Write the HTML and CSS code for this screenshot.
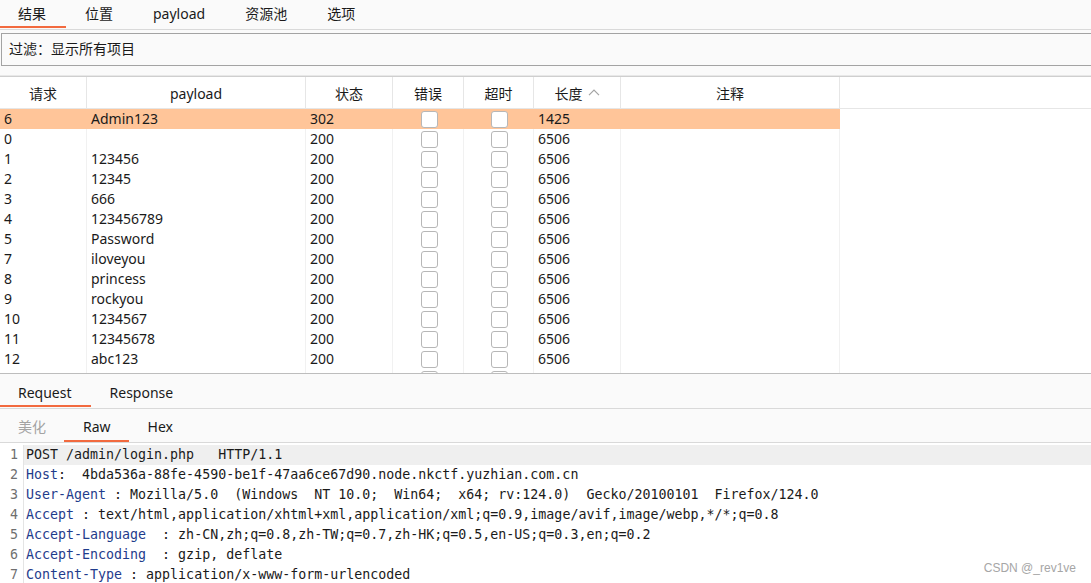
FILE: index.html
```html
<!DOCTYPE html>
<html lang="zh-CN">
<head>
<meta charset="utf-8">
<title>Intruder 结果</title>
<link rel="stylesheet" href="styles.css">
</head>
<body>
<div class="app">
  <nav class="tabs top-tabs">
    <span class="tab active">结果</span>
    <span class="tab">位置</span>
    <span class="tab">payload</span>
    <span class="tab">资源池</span>
    <span class="tab">选项</span>
  </nav>

  <div class="filter">过滤：显示所有项目</div>

  <div class="table">
    <div class="thead">
      <div class="row head">
        <div class="cell">请求</div>
        <div class="cell">payload</div>
        <div class="cell">状态</div>
        <div class="cell">错误</div>
        <div class="cell">超时</div>
        <div class="cell"><span class="sort">长度<svg class="chev" width="12" height="7" viewBox="0 0 12 7"><polyline points="1,6.2 6,1.2 11,6.2" fill="none" stroke="#a3a3a3" stroke-width="1.2"/></svg></span></div>
        <div class="cell">注释</div>
      </div>
    </div>
    <div class="tbody">
      <div class="row sel"><div class="cell">6</div><div class="cell">Admin123</div><div class="cell">302</div><div class="cell c"><i class="cb"></i></div><div class="cell c"><i class="cb"></i></div><div class="cell">1425</div><div class="cell"></div></div>
      <div class="row"><div class="cell">0</div><div class="cell"></div><div class="cell">200</div><div class="cell c"><i class="cb"></i></div><div class="cell c"><i class="cb"></i></div><div class="cell">6506</div><div class="cell"></div></div>
      <div class="row"><div class="cell">1</div><div class="cell">123456</div><div class="cell">200</div><div class="cell c"><i class="cb"></i></div><div class="cell c"><i class="cb"></i></div><div class="cell">6506</div><div class="cell"></div></div>
      <div class="row"><div class="cell">2</div><div class="cell">12345</div><div class="cell">200</div><div class="cell c"><i class="cb"></i></div><div class="cell c"><i class="cb"></i></div><div class="cell">6506</div><div class="cell"></div></div>
      <div class="row"><div class="cell">3</div><div class="cell">666</div><div class="cell">200</div><div class="cell c"><i class="cb"></i></div><div class="cell c"><i class="cb"></i></div><div class="cell">6506</div><div class="cell"></div></div>
      <div class="row"><div class="cell">4</div><div class="cell">123456789</div><div class="cell">200</div><div class="cell c"><i class="cb"></i></div><div class="cell c"><i class="cb"></i></div><div class="cell">6506</div><div class="cell"></div></div>
      <div class="row"><div class="cell">5</div><div class="cell">Password</div><div class="cell">200</div><div class="cell c"><i class="cb"></i></div><div class="cell c"><i class="cb"></i></div><div class="cell">6506</div><div class="cell"></div></div>
      <div class="row"><div class="cell">7</div><div class="cell">iloveyou</div><div class="cell">200</div><div class="cell c"><i class="cb"></i></div><div class="cell c"><i class="cb"></i></div><div class="cell">6506</div><div class="cell"></div></div>
      <div class="row"><div class="cell">8</div><div class="cell">princess</div><div class="cell">200</div><div class="cell c"><i class="cb"></i></div><div class="cell c"><i class="cb"></i></div><div class="cell">6506</div><div class="cell"></div></div>
      <div class="row"><div class="cell">9</div><div class="cell">rockyou</div><div class="cell">200</div><div class="cell c"><i class="cb"></i></div><div class="cell c"><i class="cb"></i></div><div class="cell">6506</div><div class="cell"></div></div>
      <div class="row"><div class="cell">10</div><div class="cell">1234567</div><div class="cell">200</div><div class="cell c"><i class="cb"></i></div><div class="cell c"><i class="cb"></i></div><div class="cell">6506</div><div class="cell"></div></div>
      <div class="row"><div class="cell">11</div><div class="cell">12345678</div><div class="cell">200</div><div class="cell c"><i class="cb"></i></div><div class="cell c"><i class="cb"></i></div><div class="cell">6506</div><div class="cell"></div></div>
      <div class="row"><div class="cell">12</div><div class="cell">abc123</div><div class="cell">200</div><div class="cell c"><i class="cb"></i></div><div class="cell c"><i class="cb"></i></div><div class="cell">6506</div><div class="cell"></div></div>
      <div class="row"><div class="cell"></div><div class="cell"></div><div class="cell"></div><div class="cell c"><i class="cb"></i></div><div class="cell c"><i class="cb"></i></div><div class="cell"></div><div class="cell"></div></div>
    </div>
  </div>

  <nav class="tabs msg-tabs">
    <span class="tab active">Request</span>
    <span class="tab">Response</span>
  </nav>

  <nav class="tabs sub-tabs">
    <span class="tab dim">美化</span>
    <span class="tab active">Raw</span>
    <span class="tab">Hex</span>
  </nav>

  <div class="editor">
    <div class="line cur"><span class="ln">1</span><span class="code">POST /admin/login.php   HTTP/1.1</span></div>
    <div class="line"><span class="ln">2</span><span class="code"><b class="k">Host</b>:  4bda536a-88fe-4590-be1f-47aa6ce67d90.node.nkctf.yuzhian.com.cn</span></div>
    <div class="line"><span class="ln">3</span><span class="code"><b class="k">User-Agent</b> : Mozilla/5.0  (Windows  NT 10.0;  Win64;  x64; rv:124.0)  Gecko/20100101  Firefox/124.0</span></div>
    <div class="line"><span class="ln">4</span><span class="code"><b class="k">Accept</b> : text/html,application/xhtml+xml,application/xml;q=0.9,image/avif,image/webp,*/*;q=0.8</span></div>
    <div class="line"><span class="ln">5</span><span class="code"><b class="k">Accept-Language</b>  : zh-CN,zh;q=0.8,zh-TW;q=0.7,zh-HK;q=0.5,en-US;q=0.3,en;q=0.2</span></div>
    <div class="line"><span class="ln">6</span><span class="code"><b class="k">Accept-Encoding</b>  : gzip, deflate</span></div>
    <div class="line"><span class="ln">7</span><span class="code"><b class="k">Content-Type</b> : application/x-www-form-urlencoded</span></div>
  </div>

  <div class="watermark">CSDN @_rev1ve</div>
</div>
</body>
</html>
```

FILE: styles.css
```css
* { box-sizing: border-box; }

html, body {
  margin: 0;
  padding: 0;
}

body {
  width: 1091px;
  height: 583px;
  overflow: hidden;
  background: #fafafa;
  color: #1a1a1a;
  font-family: "Noto Sans", "Noto Sans CJK SC", sans-serif;
  font-size: 14px;
}

.app {
  position: relative;
  width: 1091px;
  height: 583px;
  overflow: hidden;
}

/* ---------- tabs ---------- */
.tabs {
  display: flex;
  align-items: stretch;
  background: #fafafa;
  border-bottom: 1px solid #d9d9d9;
}

.tab {
  position: relative;
  padding: 0 20px;
  white-space: nowrap;
  color: #1a1a1a;
}

.tab:first-child { padding-left: 18px; }

.tab.active::after {
  content: "";
  position: absolute;
  left: 0;
  right: 0;
  bottom: 1px;
  height: 2px;
  background: #f26a3f;
}

.top-tabs { height: 30px; }
.top-tabs .tab { line-height: 28px; }
.top-tabs .tab:nth-child(2) { padding-left: 19px; }

.msg-tabs { height: 35px; }
.msg-tabs .tab { padding: 4px 19px 0; line-height: 30px; }
.msg-tabs .tab:first-child { padding-left: 18px; }

.sub-tabs { height: 34px; }
.sub-tabs .tab { line-height: 36px; padding: 0 18px; }
.sub-tabs .tab + .tab { padding-left: 19px; }
.sub-tabs .tab.active::after { bottom: 0; }
.tab.dim { color: #a3a3a3; }

/* ---------- filter ---------- */
.filter {
  margin: 3px -4px 0 1px;
  height: 33px;
  border: 1px solid #a3a3a3;
  padding-left: 7px;
  line-height: 30px;
  background: #fafafa;
}

/* ---------- table ---------- */
.table {
  margin-top: 10px;
  background: #ffffff;
  border-top: 1px solid #cfcfcf;
  box-shadow: 0 -1px 0 #e8e8e8;
}

.thead {
  background: #ffffff;
  border-bottom: 1px solid #e6e6e6;
}

.row {
  display: grid;
  grid-template-columns: 87px 219px 87px 71px 70px 87px 219px;
  width: 840px;
}

.row.head { height: 31px; }

.head .cell {
  display: flex;
  align-items: center;
  justify-content: center;
  border-right: 1px solid #e6e6e6;
  padding-top: 1px;
}

.sort {
  display: inline-flex;
  align-items: center;
  gap: 5px;
}

.chev { display: block; margin-top: -1px; }

.tbody {
  height: 265px;
  overflow: hidden;
  background: #ffffff;
  border-bottom: 1px solid #bdbdbd;
}

.tbody .row { height: 20px; }

.tbody .cell {
  padding-left: 4px;
  line-height: 20px;
  white-space: nowrap;
  border-right: 1px solid #f1f1f1;
}

.tbody .cell.c {
  display: flex;
  justify-content: center;
  align-items: center;
  padding-left: 0;
}

.row.sel { background: #ffc599; }
.row.sel .cell { border-right-color: #ffc599; }

.cb {
  display: block;
  width: 17px;
  height: 17px;
  border: 1.5px solid #b7b7b7;
  border-radius: 3px;
  background: #ffffff;
  margin-left: 2px;
}

/* ---------- editor ---------- */
.editor {
  background: #ffffff;
  height: 200px;
  padding-top: 2px;
  font-family: "DejaVu Sans Mono", "Liberation Mono", monospace;
  font-size: 13.3px;
}

.line {
  display: flex;
  height: 20px;
  line-height: 20px;
}

.ln {
  width: 24px;
  flex: none;
  text-align: right;
  padding-right: 5px;
  color: #6f6f6f;
  border-right: 1px solid #e4e4e4;
}

.code {
  flex: 1;
  padding-left: 2px;
  white-space: pre;
  color: #1a1a1a;
}

.line.cur .code { background: #efefef; }

.k {
  font-weight: normal;
  color: #1f3c8c;
}

/* ---------- watermark ---------- */
.watermark {
  position: absolute;
  right: 15px;
  bottom: 8px;
  font-family: "Liberation Sans", Arial, sans-serif;
  font-size: 12px;
  color: #a6a6a6;
}
```
